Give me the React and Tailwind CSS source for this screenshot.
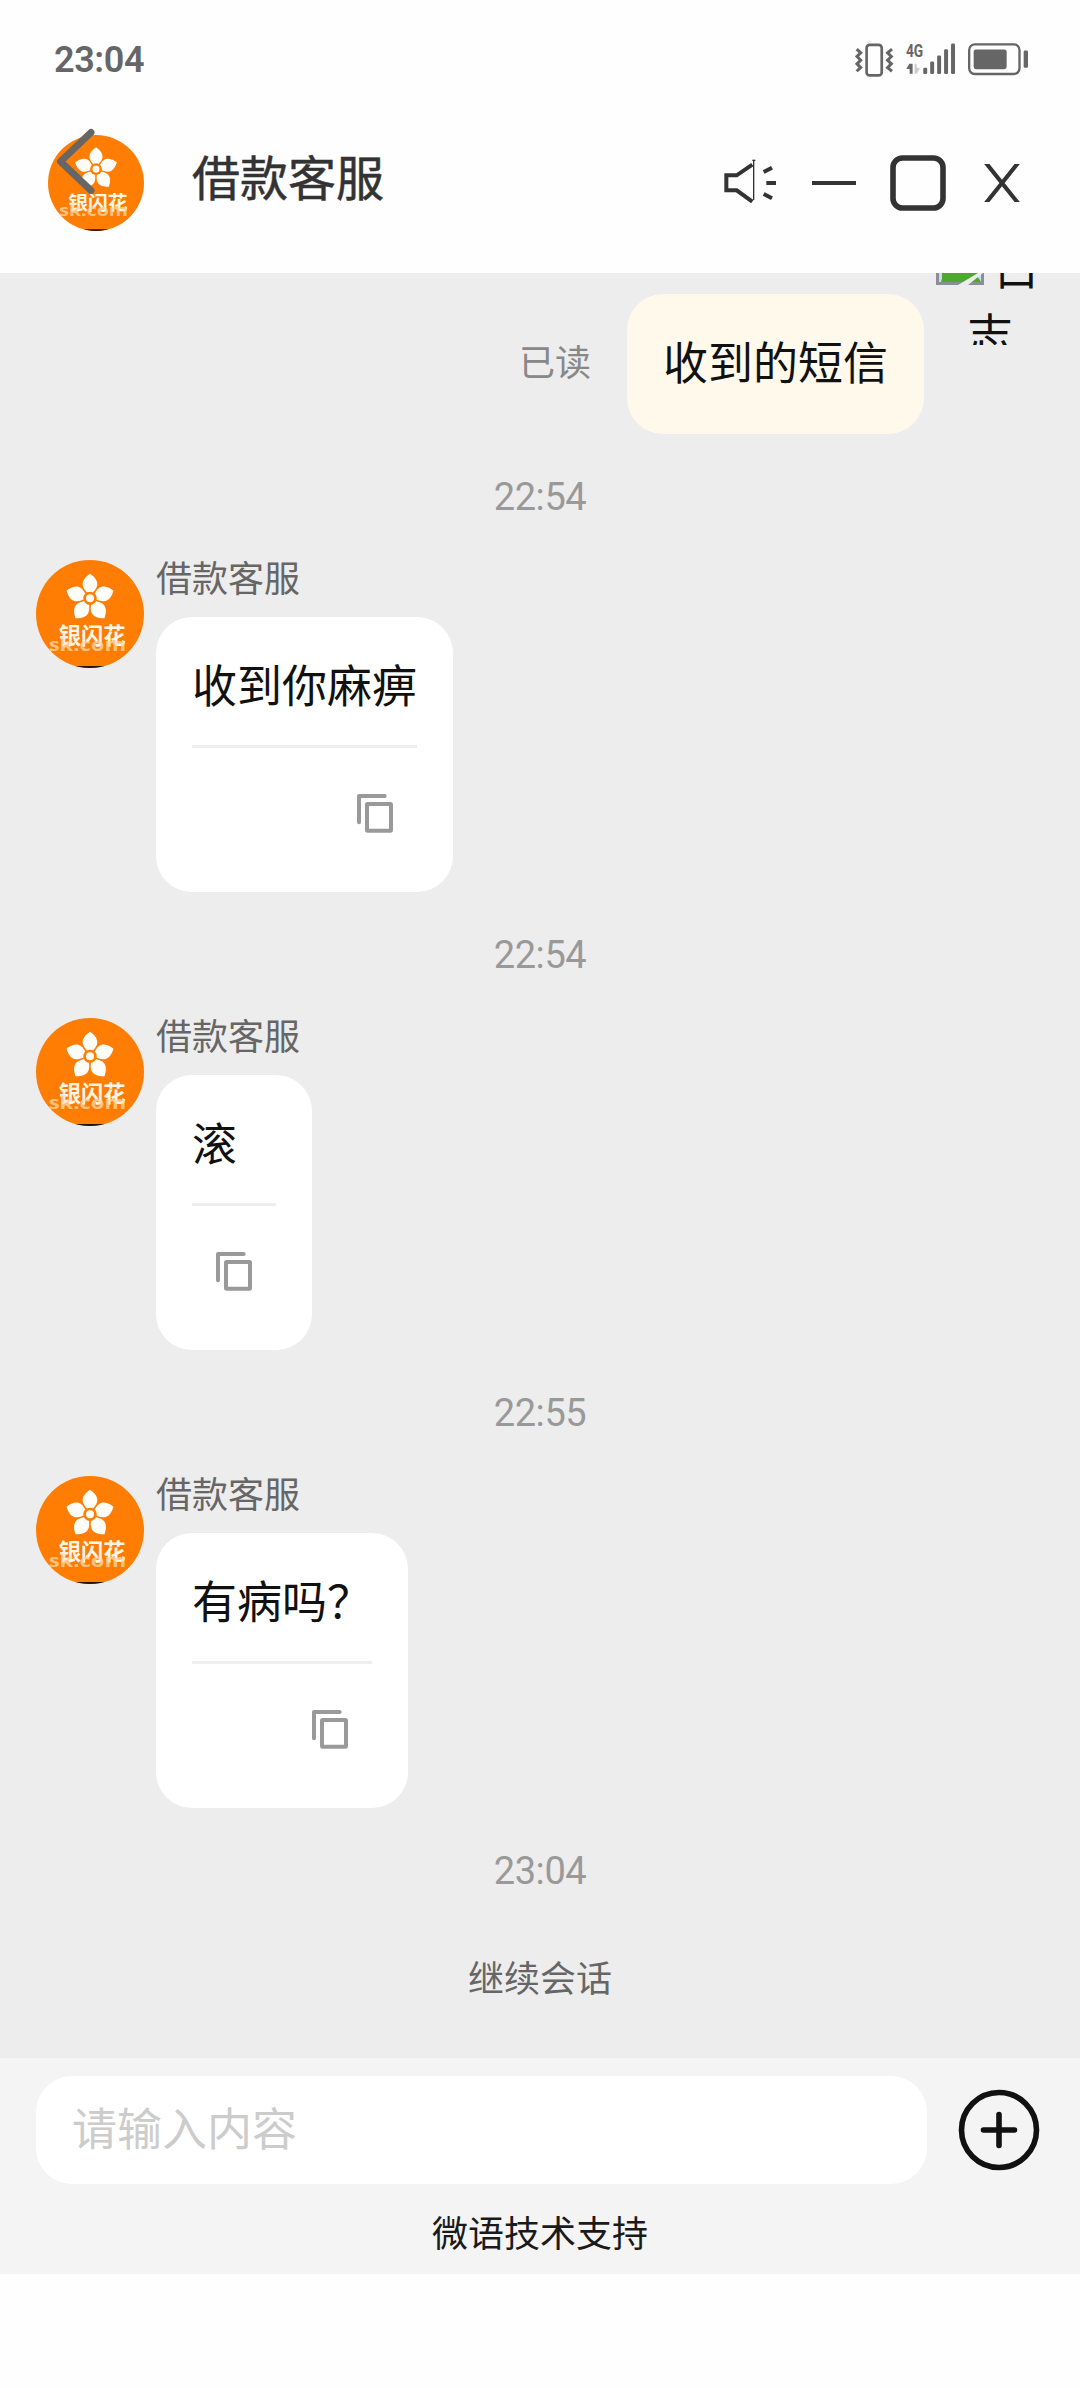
import React from "react";

const messages = [
    { time: "22:54", text: "收到你麻痹" },
    { time: "22:54", text: "滚" },
    { time: "22:55", text: "有病吗？" },
];

const Avatar = ({ className }) => (
    <svg viewBox="0 0 324 324" className={`rounded-full shrink-0 ${className}`}>
        <rect width="324" height="324" fill="#fe7d02" />
        <rect y="318" width="324" height="6" fill="#2a1500" />
        <g fill="#fffdf8" transform="translate(162 115)">
            {[0, 72, 144, 216, 288].map((deg) => (
                <path
                    key={deg}
                    transform={`rotate(${deg})`}
                    d="M0 -74 C8 -68 22 -58 22 -42 C22 -30 12 -22 5 -12 H-5 C-12 -22 -22 -30 -22 -42 C-22 -58 -8 -68 0 -74Z"
                />
            ))}
            <circle r="20" fill="#fe7d02" />
            <circle r="12" />
        </g>
        <text x="68" y="253" fontSize="67" fontWeight="700" fill="#fff6e6" textLength="201">
            银闪花
        </text>
        <text x="38" y="273" fontSize="53" fontWeight="700" fontFamily="Open Sans" fill="#ffd9a8" opacity="0.75" textLength="232" lengthAdjust="spacingAndGlyphs">
            sk.com
        </text>
    </svg>
);

const CopyIcon = () => (
    <svg viewBox="0 0 108 116" className="w-9" fill="none" stroke="#999" strokeWidth="12">
        <path d="M83 6H6V85" strokeLinecap="round" strokeLinejoin="round" />
        <rect x="30" y="30" width="72" height="80" rx="2" />
    </svg>
);

const StatusBar = () => (
    <div className="h-[118px] pl-[54px] pr-[52px] flex items-center justify-between text-[#666]">
        <span className="font-['Roboto'] font-semibold text-4xl leading-none tracking-[-0.4px] mt-px">23:04</span>

        <div className="flex items-center gap-3 mt-[3px]">
            {/* Vibrate */}
            <svg viewBox="528 130 116 104" className="w-[39px] h-[35px]" fill="none" stroke="#666">
                <rect x="562.5" y="135.5" width="45" height="91" rx="9" strokeWidth="8" />
                <path d="M533 148L545 159L534 170L545 181L534 192L545 203L533 214" strokeWidth="9" />
                <path d="M638 148L625 159L636 170L625 181L636 192L625 203L638 214" strokeWidth="9" />
            </svg>

            {/* Signal */}
            <svg viewBox="677 130 151 104" className="w-[50px] h-[35px]" fill="#666">
                <text x="677" y="171" fontSize="54" fontWeight="700" textLength="52" lengthAdjust="spacingAndGlyphs" fontFamily="Roboto">4G</text>
                <path d="M687 192H697V222H688V208H678Z" />
                <path d="M703 192H709V203L719 206L709 222H703Z" fill="#ccc" />
                <rect x="729" y="204" width="12" height="19" rx="4" />
                <rect x="750" y="185" width="12" height="38" rx="4" />
                <rect x="771" y="167" width="12" height="56" rx="4" />
                <rect x="792" y="148" width="12" height="75" rx="4" />
                <rect x="813" y="131" width="12" height="92" rx="4" />
            </svg>

            {/* Battery */}
            <svg viewBox="864 130 180 104" className="w-[60px] h-[35px]" fill="#666">
                <rect x="867.5" y="133.5" width="151" height="89" rx="17" fill="none" stroke="#666" strokeWidth="7" />
                <rect x="881" y="149" width="99" height="59" rx="7" />
                <rect x="1031" y="152" width="13" height="52" rx="4" />
            </svg>
        </div>
    </div>
);

const Header = () => (
    <div className="h-[155px] pb-[25px] pl-12 pr-[60px] flex items-center text-[#333]">
        <div className="relative">
            <Avatar className="w-24 h-24" />
            <svg viewBox="0 0 40 66" className="absolute left-[7px] top-[-7px] w-10 h-[66px]" fill="none" stroke="#666" strokeWidth="7" strokeLinecap="round" strokeLinejoin="round">
                <path d="M36 4.5L5.5 33.5L36 62.5" />
            </svg>
        </div>
        <h1 className="ml-12 text-5xl leading-none -mt-4 [-webkit-text-stroke:0.5px_#333]">借款客服</h1>

        <div className="ml-auto flex items-center">
            <svg viewBox="129 459 180 180" className="w-[60px] h-[60px]" fill="none" stroke="#333">
                <path d="M217 494L170 526H139V571H170L217 605" strokeWidth="12" />
                <path d="M221 482V600" strokeWidth="4" />
                <path d="M217 481H226" strokeWidth="4" />
                <path d="M251 516L276 503M259 549H288M251 582L276 595" strokeWidth="12" />
            </svg>
            <svg viewBox="0 0 44 4" className="w-11 h-1 ml-[29px]">
                <path d="M0 2H44" stroke="#333" strokeWidth="4" />
            </svg>
            <svg viewBox="0 0 56 56" className="w-14 h-14 ml-[34px]" fill="none" stroke="#333" strokeWidth="5.6">
                <rect x="3" y="3" width="50" height="50" rx="9.5" />
            </svg>
            <svg viewBox="0 0 108 115" className="w-9 h-[38px] ml-[38px]" fill="#333">
                <path d="M0 0H16L108 115H92ZM92 0H108L16 115H0Z" />
            </svg>
        </div>
    </div>
);

const TimeLabel = ({ children }) => (
    <div className="h-[126px] flex items-center justify-center font-['Roboto'] text-[38px] tracking-[-0.4px] text-[#999]">
        {children}
    </div>
);

const SentMessage = () => (
    <div className="flex pr-9 justify-end items-start">
        <span className="mt-[105px] mr-9 text-4xl leading-none text-[#888]">已读</span>
        <div className="mt-[57px] mr-3 h-[140px] px-9 rounded-[36px] bg-[#fff9ec] text-[45px] leading-[133px] text-[#111]">
            收到的短信
        </div>

        {/* Avatar that failed to load, with its alt text wrapped */}
        <div className="w-[108px] h-[108px] overflow-hidden text-[45px] text-[#111] leading-[52px]">
            <div className="flex h-[52px] items-start">
                <svg viewBox="0 0 48 48" className="w-12 h-12 shrink-0">
                    <path d="M0 0H32L48 16V48H0Z" fill="#8b8f95" />
                    <path d="M3 3H32L45 16V45H3Z" fill="#c9dcf5" />
                    <path d="M5 45C7 30 38 30 45 45Z" fill="#4ea72e" />
                    <path d="M6 45V36H42V45Z" fill="#4ea72e" />
                    <path d="M22 48L42 36H47L32 48Z" fill="#ededed" />
                </svg>
                <span className="ml-[10px] mt-[3px]">白</span>
            </div>
            <div className="text-center mt-[18px]">志</div>
        </div>
    </div>
);

const ReceivedMessage = ({ text }) => (
    <div className="flex pl-9 gap-3 items-start">
        <Avatar className="w-[108px] h-[108px]" />
        <div>
            <div className="h-[57px] text-4xl leading-8 text-[#666]">借款客服</div>
            <div className="w-fit h-[275px] px-9 rounded-[36px] bg-white text-[#111]">
                <div className="h-[131px] text-[45px] leading-[134px] border-b-3 border-[#eee]">{text}</div>
                <div className="flex justify-end px-6 pt-[46px]">
                    <CopyIcon />
                </div>
            </div>
        </div>
    </div>
);

const Composer = () => (
    <div className="h-[216px] pt-[18px] bg-[#f4f4f4]">
        <div className="flex items-center pl-9 pr-10">
            <div className="flex-1 h-[108px] px-9 rounded-[36px] bg-white text-[45px] leading-[102px] text-[#ccc]">
                请输入内容
            </div>
            <svg viewBox="0 0 82 82" className="w-[82px] h-[82px] ml-[31px]" fill="none" stroke="#111" strokeWidth="5.6" strokeLinecap="round">
                <circle cx="41" cy="41" r="37.5" />
                <path d="M41 25.5V56.5M25.5 41H56.5" />
            </svg>
        </div>
        <p className="mt-[29px] text-center text-4xl leading-none text-[#1a1a1a]">微语技术支持</p>
    </div>
);

const App = () => {
    return (
        <div className="w-[1080px] h-[2388px] bg-[#fefefe] overflow-hidden font-['Noto_Sans_CJK_SC',sans-serif]">
            <StatusBar />
            <Header />

            <div className="h-[1785px] bg-[#ededed] overflow-hidden">
                <div className="-mt-9">
                    <SentMessage />
                    {messages.map((message, index) => (
                        <div key={index}>
                            <TimeLabel>{message.time}</TimeLabel>
                            <ReceivedMessage text={message.text} />
                        </div>
                    ))}
                    <TimeLabel>23:04</TimeLabel>
                    <div className="mt-6 text-center text-4xl leading-none text-[#666]">继续会话</div>
                </div>
            </div>

            <Composer />
        </div>
    );
};

export default App;
